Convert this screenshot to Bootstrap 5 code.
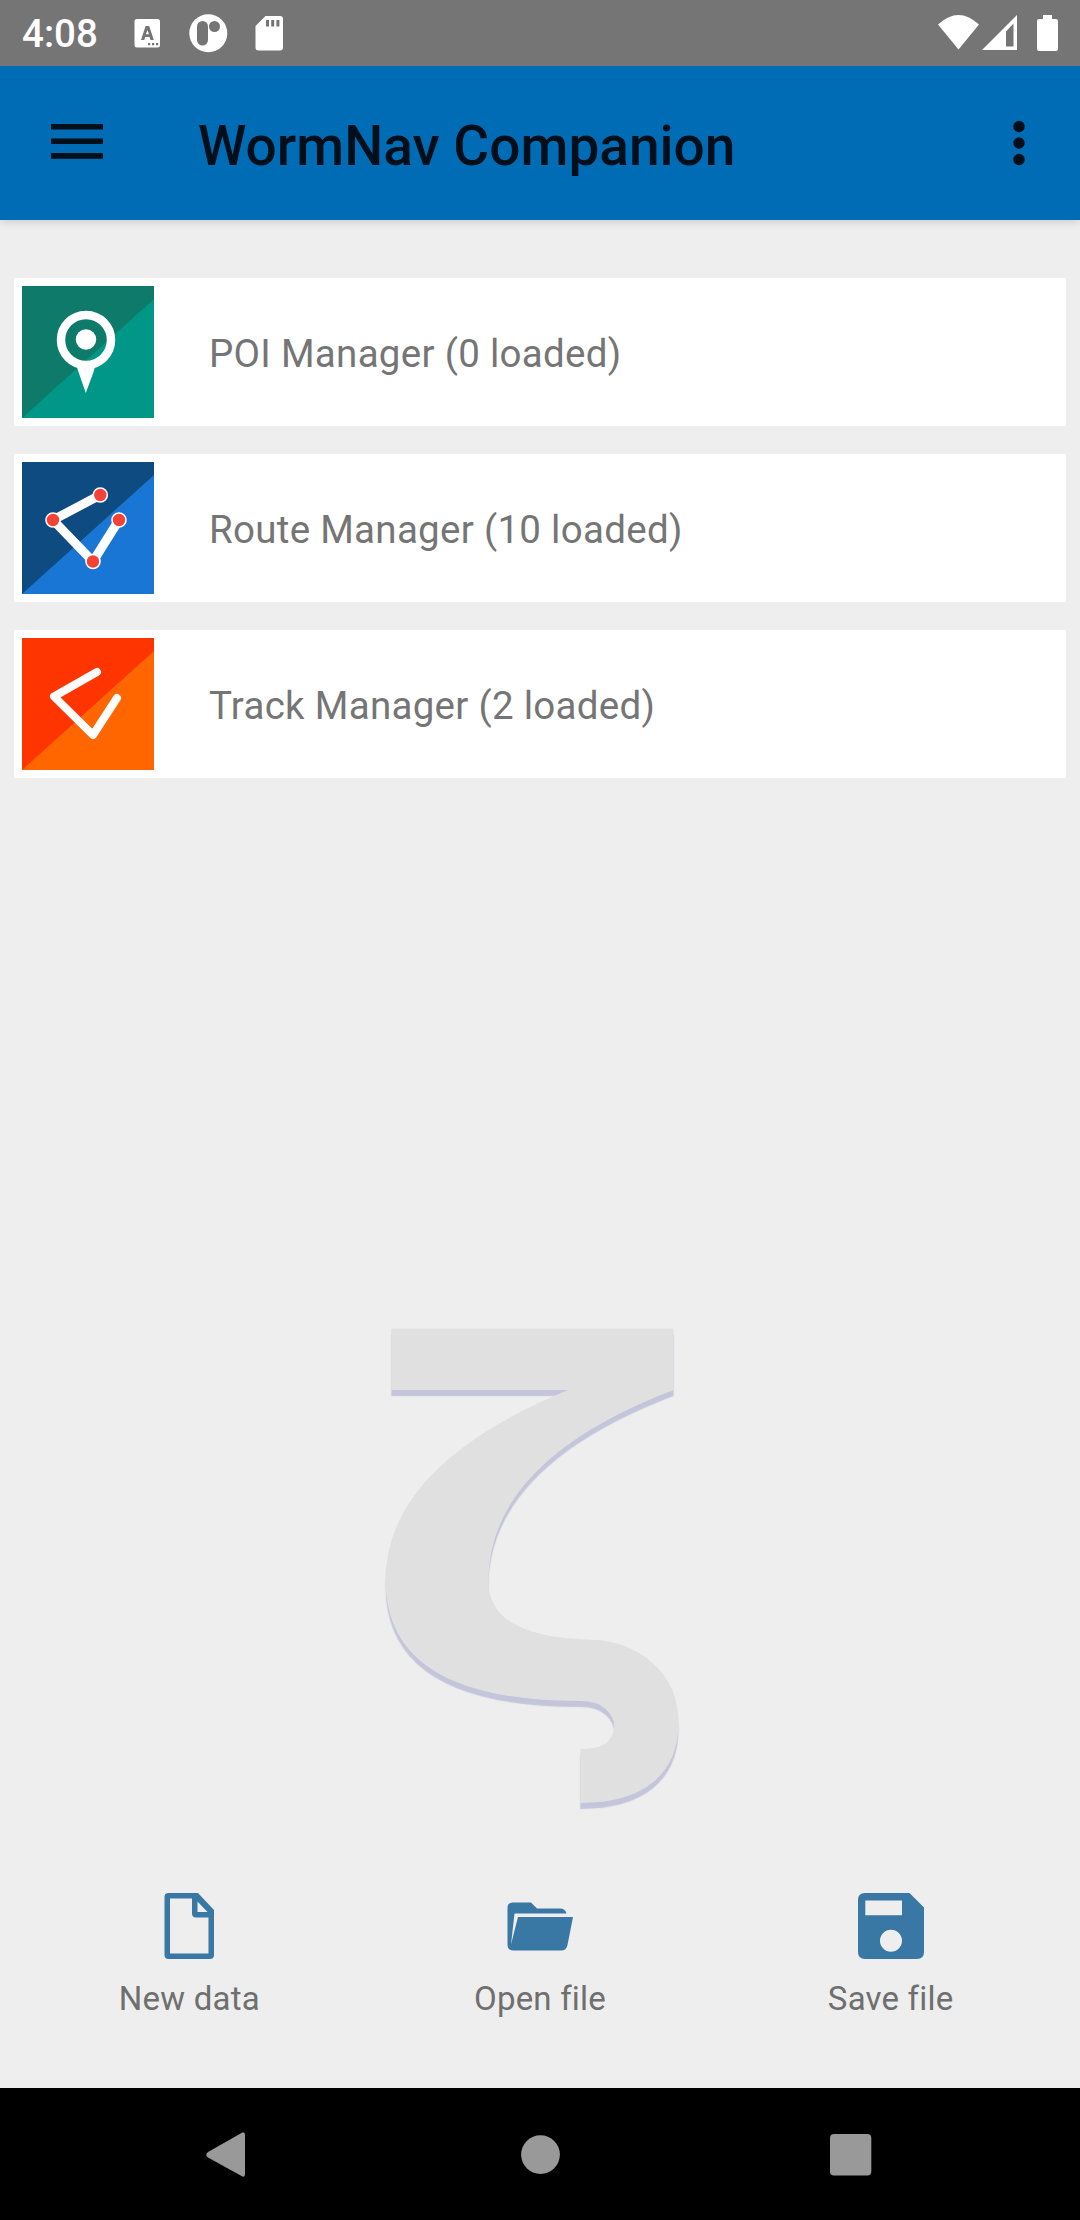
<!DOCTYPE html>
<html lang="en">
<head>
<meta charset="utf-8">
<meta name="viewport" content="width=device-width, initial-scale=1">
<title>WormNav Companion</title>
<link href="https://cdn.jsdelivr.net/npm/bootstrap@5.3.0/dist/css/bootstrap.min.css" rel="stylesheet">
<style>
  body { font-family: Roboto, "Noto Sans", sans-serif; background: #eee; height: 2220px; overflow: hidden; }
  svg { display: block; flex: none; }
  .status-bar { height: 66px; background: #757575; color: #fff; padding-left: 22px; padding-right: 22px; }
  .clock { font-size: 38.5px; font-weight: 500; line-height: 66px; width: 112px; padding-top: 2px; }
  .app-bar { height: 154px; background: #006cb5; color: #000f19; padding: 0 44px; box-shadow: 0 0 10px rgba(0,0,0,.2); z-index: 1; }
  .status-bar { position: relative; z-index: 2; }
  .app-title { font-size: 55px; font-weight: 500; line-height: 64px; padding-top: 6px; margin-left: 88px; letter-spacing: 0; }
  .managers { padding: 58px 14px 0; gap: 28px; }
  .manager { height: 148px; padding: 8px; background: #fff; color: #757575; font-size: 38.5px; letter-spacing: .29px; }
  .manager span { margin-left: 55px; padding-top: 4px; }
  .zeta { font-family: "DejaVu Sans", sans-serif; font-weight: 700; font-size: 490px; line-height: 1; color: #e0e0e0; text-shadow: 0 6px 1px #c4c4da; transform: scaleX(1.2); margin: 0 12px 116px 0; }
  .actions { padding: 0 14px; height: 195px; }
  .action { font-size: 33px; line-height: 39px; color: #6f6f6f; letter-spacing: .2px; }
  .action svg { margin-bottom: 20px; }
  .nav-keys { height: 132px; }
</style>
</head>
<body class="d-flex flex-column">
  <header class="status-bar d-flex align-items-center">
    <span class="clock">4:08</span>
    <svg width="150" height="66" viewBox="134 0 150 66" fill="#fff">
      <path fill-rule="evenodd" d="M137 19H157.500Q160 19 160 21.500V45Q160 47.500 157.500 47.500H137Q134.500 47.500 134.500 45V21.500Q134.500 19 137 19ZM145.600 26L141 40H144.200L145.200 37H149.600L150.600 40H153.800L149.200 26ZM147.400 30L149 34.300H145.900ZM148 43V45.300H150.200V43ZM152 43V45.300H154.200V43ZM156 43V45.300H158.200V43Z"/>
      <circle cx="208.300" cy="33.300" r="19"/>
      <rect x="197" y="21" width="11" height="24.500" rx="5.500" fill="#757575"/><circle cx="214.500" cy="26.500" r="5.500" fill="#757575"/>
      <path fill-rule="evenodd" d="M265.500 16H280Q283 16 283 19V47.500Q283 50.500 280 50.500H258.500Q255.500 50.500 255.500 47.500V26ZM266 20V26.500H269V20ZM271.200 20V26.500H274.200V20ZM276.400 20V26.500H279.400V20Z"/>
    </svg>
    <svg class="ms-auto" width="122" height="66" viewBox="936 0 122 66" fill="#fff">
      <path d="M938 24.500Q958.500 5.500 979 24.500L958.500 49.500Z"/>
      <path fill-rule="evenodd" d="M982 50L1017 15V50ZM1006 31.500V46.500H1013.500V23.500Z"/>
      <path d="M1043 15H1052V19H1056Q1058 19 1058 21V49Q1058 51 1056 51H1039Q1037 51 1037 49V21Q1037 19 1039 19H1043Z"/>
    </svg>
  </header>

  <nav class="app-bar d-flex align-items-center position-relative">
    <svg width="66" height="66" viewBox="44 110 66 66" fill="#000f19"><path d="M51 124H103V129.500H51ZM51 138.500H103V144H51ZM51 153H103V158.700H51Z"/></svg>
    <h1 class="app-title mb-0">WormNav Companion</h1>
    <svg class="ms-auto" width="36" height="66" viewBox="1000 110 36 66" fill="#000f19"><circle cx="1019" cy="126.500" r="5.700"/><circle cx="1019" cy="143" r="5.700"/><circle cx="1019" cy="159.500" r="5.700"/></svg>
  </nav>

  <main class="flex-grow-1 d-flex flex-column">
    <section class="managers d-flex flex-column">
      <div class="manager d-flex align-items-center">
        <svg width="132" height="132" viewBox="0 0 132 132"><path fill="#0d7a6a" d="M0 0H132V132H0Z"/><path fill="#009788" d="M132 13V132H0Z"/><circle cx="64" cy="54" r="25" fill="none" stroke="#fff" stroke-width="8.500"/><circle cx="64" cy="53.500" r="10.200" fill="#fff"/><path fill="#fff" d="M54 78Q64 83 74 78Q72 84 71.500 86L63.800 107L56.500 86Z"/></svg>
        <span>POI Manager (0 loaded)</span>
      </div>
      <div class="manager d-flex align-items-center">
        <svg width="132" height="132" viewBox="0 0 132 132"><path fill="#0d4b81" d="M0 0H132V132H0Z"/><path fill="#1976d4" d="M132 13V132H0Z"/><path d="M78.300 33L31 58L71 99.500L97 58" fill="none" stroke="#fff" stroke-width="9"/><g fill="#f64136" stroke="#fff" stroke-width="1.600"><circle cx="78.300" cy="33" r="7"/><circle cx="31" cy="58" r="7"/><circle cx="71" cy="99.500" r="7"/><circle cx="97" cy="58" r="7"/></g></svg>
        <span>Route Manager (10 loaded)</span>
      </div>
      <div class="manager d-flex align-items-center">
        <svg width="132" height="132" viewBox="0 0 132 132"><path fill="#ff3500" d="M0 0H132V132H0Z"/><path fill="#ff6600" d="M132 13V132H0Z"/><path d="M75 34L32 58.500L71 97L95 60" fill="none" stroke="#fff" stroke-width="8" stroke-linecap="round" stroke-linejoin="round"/></svg>
        <span>Track Manager (2 loaded)</span>
      </div>
    </section>

    <div class="flex-grow-1 d-flex justify-content-center align-items-end"><div class="zeta" aria-hidden="true">ζ</div></div>

    <section class="actions d-flex">
      <div class="action col-4 d-flex flex-column align-items-center">
        <svg width="66" height="66" viewBox="0 0 66 66"><path fill="#3977a4" fill-rule="evenodd" d="M12.500 0H42L58 17V62Q58 66 54 66H12.500Q8.500 66 8.500 62V4Q8.500 0 12.500 0ZM14 5.500V60.500H52.500V24.500H40Q36 24.500 36 20.500V5.500ZM41.500 8.500V19H51.500Z"/></svg>
        <span>New data</span>
      </div>
      <div class="action col-4 d-flex flex-column align-items-center">
        <svg width="66" height="66" viewBox="0 0 66 66" fill="#3977a4"><path d="M6 9.500H24L30 15.500H53Q58 15.500 59.500 20.500H7.500L4 51.500L11 24H66L60.500 52Q59.500 57.500 54 57.500H6.500Q.5 57.500 .5 51.500V15Q.5 9.500 6 9.500Z"/></svg>
        <span>Open file</span>
      </div>
      <div class="action col-4 d-flex flex-column align-items-center">
        <svg width="66" height="66" viewBox="0 0 66 66"><path fill="#3977a4" fill-rule="evenodd" d="M7 0H51.500L66 14.500V59Q66 66 59 66H7Q0 66 0 59V7Q0 0 7 0ZM7.300 7.500V22.300H44V7.500ZM33 36.800A11 11 0 1 0 33 58.800A11 11 0 1 0 33 36.800Z"/></svg>
        <span>Save file</span>
      </div>
    </section>
  </main>

  <footer class="nav-keys bg-black">
    <svg width="1080" height="132" viewBox="0 2088 1080 132" fill="#999"><path d="M208 2152L241.500 2133Q245 2131 245 2135V2174Q245 2178 241.500 2176L208 2157.500Q204.500 2155 208 2152Z"/><circle cx="540.500" cy="2154.600" r="19.400"/><rect x="830" y="2134" width="41.300" height="41.500" rx="4"/></svg>
  </footer>
<script src="https://cdn.jsdelivr.net/npm/bootstrap@5.3.0/dist/js/bootstrap.bundle.min.js"></script>
</body>
</html>
